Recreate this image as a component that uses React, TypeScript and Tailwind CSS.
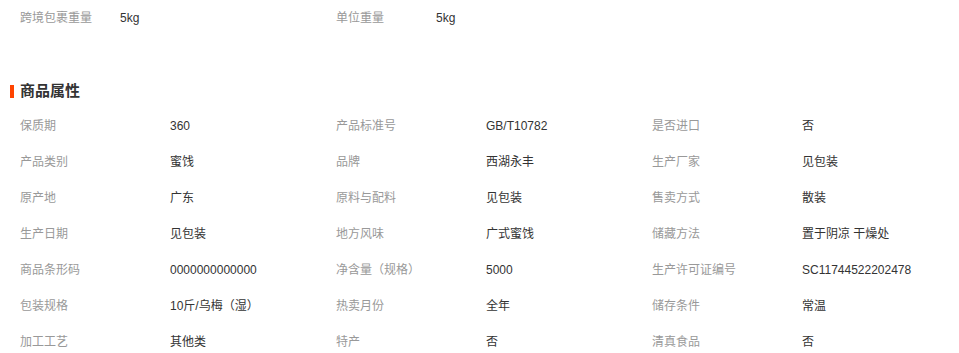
import React from "react";

const rows: [string, string][][] = [
  [["保质期", "360"], ["产品标准号", "GB/T10782"], ["是否进口", "否"]],
  [["产品类别", "蜜饯"], ["品牌", "西湖永丰"], ["生产厂家", "见包装"]],
  [["原产地", "广东"], ["原料与配料", "见包装"], ["售卖方式", "散装"]],
  [["生产日期", "见包装"], ["地方风味", "广式蜜饯"], ["储藏方法", "置于阴凉 干燥处"]],
  [["商品条形码", "0000000000000"], ["净含量（规格）", "5000"], ["生产许可证编号", "SC11744522202478"]],
  [["包装规格", "10斤/乌梅（湿）"], ["热卖月份", "全年"], ["储存条件", "常温"]],
  [["加工工艺", "其他类"], ["特产", "否"], ["清真食品", "否"]],
];

export default function App() {
  return (
    <div
      className="w-[959px] h-[353px] overflow-hidden bg-white text-[12px]"
      style={{ fontFamily: '"Liberation Sans", "Noto Sans CJK SC", sans-serif' }}
    >
      <div className="flex h-9 items-center pl-5">
        <div className="flex w-[316px] shrink-0">
          <span className="w-[100px] shrink-0 text-[#999]">跨境包裹重量</span>
          <span className="text-[#333]">5kg</span>
        </div>
        <div className="flex w-[316px] shrink-0">
          <span className="w-[100px] shrink-0 text-[#999]">单位重量</span>
          <span className="text-[#333]">5kg</span>
        </div>
      </div>
      <div className="mt-[44px] flex h-[22px] items-center pl-[10px]">
        <span className="h-[13px] w-[4px] bg-[#ff4400]" />
        <span className="ml-[6px] text-[15px] font-bold text-[#333]">商品属性</span>
      </div>
      <div className="mt-[6px] pl-5">
        {rows.map((row, i) => (
          <div key={i} className="flex h-9 items-center">
            {row.map(([k, v], j) => (
              <div key={j} className="flex w-[316px] shrink-0">
                <span className="w-[150px] shrink-0 text-[#999]">{k}</span>
                <span className="whitespace-nowrap text-[#333]">{v}</span>
              </div>
            ))}
          </div>
        ))}
      </div>
    </div>
  );
}
